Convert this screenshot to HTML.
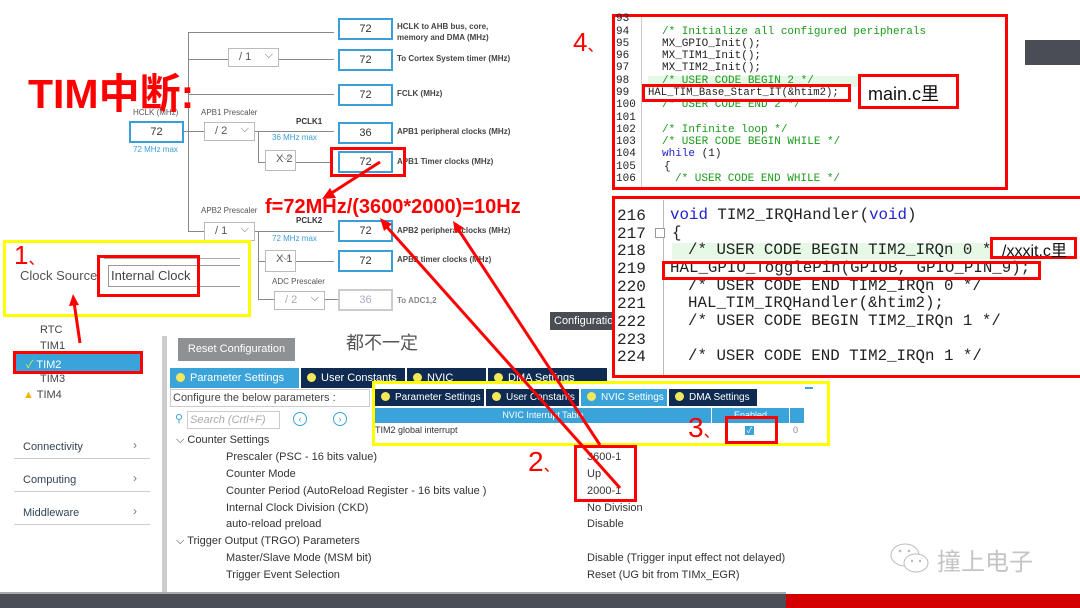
<!DOCTYPE html>
<html><head><meta charset="utf-8"><style>
*{margin:0;padding:0;box-sizing:border-box}
body{width:1080px;height:608px;position:relative;overflow:hidden;background:#fff;font-family:"Liberation Sans","Noto Sans CJK SC",sans-serif}
.a{position:absolute;white-space:nowrap}
.bx{position:absolute;border:2px solid #3a9fd8;background:#fff;text-align:center;font-size:11px;color:#333;line-height:18px;width:55px;height:22px}
.lb{position:absolute;font-size:8px;font-weight:bold;color:#444;white-space:nowrap}
.dd{position:absolute;border:1px solid #bbb;background:#fff;font-size:11px;color:#555;height:19px;width:51px;line-height:17px;padding-left:10px}
.dd:after{content:"⌵";position:absolute;right:5px;top:-2px;font-size:11px;color:#666}
.gl{position:absolute;background:#888}
.rb{position:absolute;border:3px solid #f00}
.mono{font-family:"Liberation Mono","Noto Sans CJK SC",monospace}
.c1{position:absolute;left:662px;font-size:11px;color:#222;white-space:nowrap}
.g{color:#1a9b1a}
.ln{position:absolute;left:616px;font-size:11px;color:#222}
.ln2{position:absolute;left:617px;font-size:16px;color:#222}
.c2{position:absolute;font-size:15.8px;color:#222;white-space:nowrap}
.tab{position:absolute;height:20px;background:#0f2b52;color:#fff;font-size:11px;line-height:20px;padding-left:6px;border-right:1px solid #fff;overflow:hidden}
.tab i{display:inline-block;width:9px;height:9px;border-radius:50%;background:#f2e85a;margin-right:5px;vertical-align:-1px}
.tab.on{background:#3aa3d9}
.pr{position:absolute;font-size:11px;color:#333;white-space:nowrap}
</style></head><body>

<div class="gl" style="left:188px;top:32px;width:1px;height:200px"></div>
<div class="gl" style="left:188px;top:32px;width:146px;height:1px"></div>
<div class="gl" style="left:188px;top:59px;width:40px;height:1px"></div>
<div class="gl" style="left:279px;top:59px;width:55px;height:1px"></div>
<div class="gl" style="left:188px;top:94px;width:146px;height:1px"></div>
<div class="gl" style="left:183px;top:131px;width:21px;height:1px"></div>
<div class="gl" style="left:255px;top:131px;width:79px;height:1px"></div>
<div class="gl" style="left:258px;top:131px;width:1px;height:32px"></div>
<div class="gl" style="left:258px;top:162px;width:7px;height:1px"></div>
<div class="gl" style="left:296px;top:162px;width:36px;height:1px"></div>
<div class="gl" style="left:188px;top:231px;width:16px;height:1px"></div>
<div class="gl" style="left:255px;top:231px;width:79px;height:1px"></div>
<div class="gl" style="left:258px;top:231px;width:1px;height:69px"></div>
<div class="gl" style="left:258px;top:261px;width:7px;height:1px"></div>
<div class="gl" style="left:296px;top:261px;width:38px;height:1px"></div>
<div class="gl" style="left:258px;top:299px;width:16px;height:1px"></div>
<div class="gl" style="left:325px;top:299px;width:13px;height:1px"></div>

<div class="bx" style="left:338px;top:18px">72</div>
<div class="lb" style="left:397px;top:21px;line-height:11px">HCLK to AHB bus, core,<br>memory and DMA (MHz)</div>
<div class="bx" style="left:338px;top:49px">72</div>
<div class="lb" style="left:397px;top:54px">To Cortex System timer (MHz)</div>
<div class="bx" style="left:338px;top:84px">72</div>
<div class="lb" style="left:397px;top:89px">FCLK (MHz)</div>
<div class="bx" style="left:338px;top:122px">36</div>
<div class="lb" style="left:397px;top:127px">APB1 peripheral clocks (MHz)</div>
<div class="bx" style="left:338px;top:151px">72</div>
<div class="lb" style="left:397px;top:157px">APB1 Timer clocks (MHz)</div>
<div class="bx" style="left:338px;top:220px">72</div>
<div class="lb" style="left:397px;top:226px">APB2 peripheral clocks (MHz)</div>
<div class="bx" style="left:338px;top:250px">72</div>
<div class="lb" style="left:397px;top:255px">APB2 timer clocks (MHz)</div>
<div class="bx" style="left:338px;top:289px;border-color:#ccc;color:#aac">36</div>
<div class="lb" style="left:397px;top:296px;color:#888">To ADC1,2</div>

<div class="bx" style="left:129px;top:121px">72</div>
<div class="a" style="left:133px;top:108px;font-size:8px;color:#555">HCLK (MHz)</div>
<div class="a" style="left:133px;top:145px;font-size:8px;color:#3a9fd8">72 MHz max</div>
<div class="dd" style="left:228px;top:48px">/ 1</div>
<div class="a" style="left:201px;top:108px;font-size:8px;color:#555">APB1 Prescaler</div>
<div class="dd" style="left:204px;top:122px">/ 2</div>
<div class="a" style="left:296px;top:117px;font-size:8px;font-weight:bold;color:#333">PCLK1</div>
<div class="a" style="left:272px;top:133px;font-size:8px;color:#3a9fd8">36 MHz max</div>
<div class="dd" style="left:265px;top:150px;width:31px;height:21px">X 2</div>
<div class="a" style="left:201px;top:206px;font-size:8px;color:#555">APB2 Prescaler</div>
<div class="dd" style="left:204px;top:222px">/ 1</div>
<div class="a" style="left:296px;top:216px;font-size:8px;font-weight:bold;color:#333">PCLK2</div>
<div class="a" style="left:272px;top:234px;font-size:8px;color:#3a9fd8">72 MHz max</div>
<div class="dd" style="left:265px;top:250px;width:31px;height:22px">X 1</div>
<div class="a" style="left:272px;top:277px;font-size:8px;color:#555">ADC Prescaler</div>
<div class="dd" style="left:274px;top:291px;color:#aaa">/ 2</div>

<div class="rb" style="left:330px;top:147px;width:76px;height:30px"></div>

<div class="a" style="left:28px;top:60px;font-size:41px;font-weight:bold;color:#f00">TIM中断:</div>
<div class="a" style="left:265px;top:196px;font-size:20px;color:#f00;font-weight:bold">f=72MHz/(3600*2000)=10Hz</div>

<div class="a" style="left:3px;top:240px;width:248px;height:77px;border:3px solid #ff0;background:#fff"></div>
<div class="a" style="left:14px;top:240px;font-size:26px;color:#f00">1<span style="font-size:16px">、</span></div>
<div class="a" style="left:20px;top:268px;font-size:13px;color:#555">Clock Source</div>
<div class="a" style="left:104px;top:258px;width:136px;height:1px;background:#aaa"></div>
<div class="a" style="left:108px;top:265px;width:132px;height:22px;border:1px solid #999;border-right:none;font-size:13px;color:#444;line-height:20px;padding-left:2px">Internal Clock</div>
<div class="rb" style="left:97px;top:255px;width:103px;height:42px"></div>

<div class="a" style="left:573px;top:27px;font-size:26px;color:#f00">4<span style="font-size:16px">、</span></div>
<div class="a" style="left:1025px;top:40px;width:55px;height:25px;background:#4a4e54"></div>
<div class="a" style="left:612px;top:14px;width:396px;height:176px;border:3px solid #f00;background:#fff;overflow:hidden"></div>
<div class="a" style="left:641px;top:17px;width:1px;height:170px;background:#ccc"></div>
<div class="a" style="left:648px;top:76px;width:290px;height:11px;background:#e6f8e6"></div>
<div class="mono">
<div class="ln" style="top:13px">93</div><div class="ln" style="top:26px">94</div><div class="ln" style="top:38px">95</div><div class="ln" style="top:50px">96</div><div class="ln" style="top:62px">97</div><div class="ln" style="top:75px">98</div><div class="ln" style="top:87px">99</div><div class="ln" style="top:99px">100</div><div class="ln" style="top:112px">101</div><div class="ln" style="top:124px">102</div><div class="ln" style="top:136px">103</div><div class="ln" style="top:148px">104</div><div class="ln" style="top:161px">105</div><div class="ln" style="top:173px">106</div>
<div class="c1 g" style="top:26px">/* Initialize all configured peripherals</div>
<div class="c1" style="top:38px">MX_GPIO_Init();</div>
<div class="c1" style="top:50px">MX_TIM1_Init();</div>
<div class="c1" style="top:62px">MX_TIM2_Init();</div>
<div class="c1 g" style="top:75px">/* USER CODE BEGIN 2 */</div>
<div class="c1" style="top:87px;left:648px;font-size:10.6px">HAL_TIM_Base_Start_IT(&amp;htim2);</div>
<div class="c1 g" style="top:99px">/* USER CODE END 2 */</div>
<div class="c1 g" style="top:124px">/* Infinite loop */</div>
<div class="c1 g" style="top:136px">/* USER CODE BEGIN WHILE */</div>
<div class="c1" style="top:148px"><span style="color:#22c">while</span> (1)</div>
<div class="c1" style="top:161px;left:664px">{</div>
<div class="c1 g" style="top:173px;left:675px">/* USER CODE END WHILE */</div>
</div>
<div class="rb" style="left:642px;top:84px;width:209px;height:18px"></div>
<div class="rb" style="left:858px;top:74px;width:101px;height:35px;background:#fff"></div>
<div class="a" style="left:868px;top:80px;font-size:18px;color:#111">main.c里</div>

<div class="a" style="left:612px;top:196px;width:468px;height:182px;border:3px solid #f00;border-right:none;background:#fff"></div>
<div class="a" style="left:663px;top:200px;width:1px;height:175px;background:#bbb"></div>
<div class="a" style="left:672px;top:243px;width:320px;height:16px;background:#e6f8e6"></div>
<div class="a" style="left:655px;top:228px;width:10px;height:10px;border:1px solid #999;background:#fff"></div>
<div class="mono">
<div class="ln2" style="top:207px">216</div><div class="ln2" style="top:225px">217</div><div class="ln2" style="top:242px">218</div><div class="ln2" style="top:260px">219</div><div class="ln2" style="top:278px">220</div><div class="ln2" style="top:295px">221</div><div class="ln2" style="top:313px">222</div><div class="ln2" style="top:331px">223</div><div class="ln2" style="top:348px">224</div>
<div class="c2" style="left:670px;top:206px"><span style="color:#22c">void</span> TIM2_IRQHandler(<span style="color:#22c">void</span>)</div>
<div class="c2" style="left:672px;top:224px">{</div>
<div class="c2 g" style="left:688px;top:241px">/* USER CODE BEGIN TIM2_IRQn 0 */</div>
<div class="c2" style="left:670px;top:259px">HAL_GPIO_TogglePin(GPIOB, GPIO_PIN_9);</div>
<div class="c2 g" style="left:688px;top:277px">/* USER CODE END TIM2_IRQn 0 */</div>
<div class="c2" style="left:688px;top:294px">HAL_TIM_IRQHandler(&amp;htim2);</div>
<div class="c2 g" style="left:688px;top:312px">/* USER CODE BEGIN TIM2_IRQn 1 */</div>
<div class="c2 g" style="left:688px;top:347px">/* USER CODE END TIM2_IRQn 1 */</div>
</div>
<div class="rb" style="left:662px;top:261px;width:379px;height:19px"></div>
<div class="rb" style="left:990px;top:237px;width:87px;height:22px;background:#fff"></div>
<div class="a" style="left:1002px;top:237px;font-size:16px;color:#111">/xxxit.c里</div>

<div class="a" style="left:40px;top:324px;font-size:11px;color:#444">RTC</div>
<div class="a" style="left:40px;top:340px;font-size:11px;color:#444">TIM1</div>
<div class="a" style="left:16px;top:354px;width:125px;height:18px;background:#3aa3d9"></div>
<div class="a" style="left:26px;top:356px;font-size:11px;color:#fff"><span style="color:#d6e84a">✓</span> TIM2</div>
<div class="rb" style="left:13px;top:351px;width:130px;height:23px"></div>
<div class="a" style="left:40px;top:373px;font-size:11px;color:#444">TIM3</div>
<div class="a" style="left:23px;top:389px;font-size:11px;color:#444"><span style="color:#f4b400">▲</span> TIM4</div>
<div class="a" style="left:23px;top:441px;font-size:11px;color:#345">Connectivity</div>
<div class="a" style="left:133px;top:438px;font-size:12px;color:#777">›</div>
<div class="a" style="left:14px;top:458px;width:136px;height:1px;background:#ccc"></div>
<div class="a" style="left:23px;top:474px;font-size:11px;color:#345">Computing</div>
<div class="a" style="left:133px;top:471px;font-size:12px;color:#777">›</div>
<div class="a" style="left:14px;top:491px;width:136px;height:1px;background:#ccc"></div>
<div class="a" style="left:23px;top:507px;font-size:11px;color:#345">Middleware</div>
<div class="a" style="left:133px;top:504px;font-size:12px;color:#777">›</div>
<div class="a" style="left:14px;top:524px;width:136px;height:1px;background:#ccc"></div>
<div class="a" style="left:162px;top:336px;width:5px;height:256px;background:#ccc"></div>

<div class="a" style="left:178px;top:338px;width:117px;height:23px;background:#8e9193;color:#fff;font-size:11px;line-height:23px;text-align:center">Reset Configuration</div>
<div class="a" style="left:346px;top:329px;font-size:18px;color:#555">都不一定</div>
<div class="a" style="left:550px;top:312px;width:62px;height:18px;background:#4a4e54;color:#fff;font-size:11px;line-height:18px;padding-left:4px;overflow:hidden">Configuratio</div>

<div class="tab on" style="left:170px;top:368px;width:130px"><i></i>Parameter Settings</div>
<div class="tab" style="left:301px;top:368px;width:105px"><i></i>User Constants</div>
<div class="tab" style="left:407px;top:368px;width:80px"><i></i>NVIC Settings</div>
<div class="tab" style="left:488px;top:368px;width:120px"><i></i>DMA Settings</div>
<div class="a" style="left:170px;top:389px;width:200px;height:18px;border:1px solid #ccc;font-size:11px;color:#444;line-height:16px;padding-left:2px">Configure the below parameters :</div>
<div class="a" style="left:175px;top:412px;font-size:11px;color:#3aa3d9">⚲</div>
<div class="a" style="left:187px;top:411px;width:93px;height:18px;border:1px solid #ccc;font-size:11px;color:#aaa;font-style:italic;line-height:16px;padding-left:2px">Search (Crtl+F)</div>
<div class="a" style="left:293px;top:412px;width:14px;height:14px;border:1px solid #3aa3d9;border-radius:50%;font-size:9px;color:#3aa3d9;text-align:center;line-height:12px">‹</div>
<div class="a" style="left:333px;top:412px;width:14px;height:14px;border:1px solid #3aa3d9;border-radius:50%;font-size:9px;color:#3aa3d9;text-align:center;line-height:12px">›</div>
<div class="pr" style="left:176px;top:434px">⌵ Counter Settings</div>
<div class="pr" style="left:226px;top:451px">Prescaler (PSC - 16 bits value)</div>
<div class="pr" style="left:226px;top:468px">Counter Mode</div>
<div class="pr" style="left:226px;top:485px">Counter Period (AutoReload Register - 16 bits value )</div>
<div class="pr" style="left:226px;top:502px">Internal Clock Division (CKD)</div>
<div class="pr" style="left:226px;top:518px">auto-reload preload</div>
<div class="pr" style="left:176px;top:535px">⌵ Trigger Output (TRGO) Parameters</div>
<div class="pr" style="left:226px;top:552px">Master/Slave Mode (MSM bit)</div>
<div class="pr" style="left:226px;top:569px">Trigger Event Selection</div>
<div class="pr" style="left:587px;top:451px">3600-1</div>
<div class="pr" style="left:587px;top:468px">Up</div>
<div class="pr" style="left:587px;top:485px">2000-1</div>
<div class="pr" style="left:587px;top:502px">No Division</div>
<div class="pr" style="left:587px;top:518px">Disable</div>
<div class="pr" style="left:587px;top:552px">Disable (Trigger input effect not delayed)</div>
<div class="pr" style="left:587px;top:569px">Reset (UG bit from TIMx_EGR)</div>

<div class="a" style="left:372px;top:381px;width:458px;height:65px;border:3px solid #ff0;background:#fff"></div>
<div class="a" style="left:805px;top:387px;width:8px;height:2px;background:#3aa3d9"></div>
<div class="tab" style="left:375px;top:389px;width:110px;height:17px;line-height:17px;font-size:10px"><i></i>Parameter Settings</div>
<div class="tab" style="left:486px;top:389px;width:94px;height:17px;line-height:17px;font-size:10px"><i></i>User Constants</div>
<div class="tab on" style="left:581px;top:389px;width:87px;height:17px;line-height:17px;font-size:10px"><i></i>NVIC Settings</div>
<div class="tab" style="left:669px;top:389px;width:89px;height:17px;line-height:17px;font-size:10px"><i></i>DMA Settings</div>
<div class="a" style="left:375px;top:408px;width:336px;height:15px;background:#3aa3d9;color:#fff;font-size:9px;text-align:center;line-height:15px">NVIC Interrupt Table</div>
<div class="a" style="left:712px;top:408px;width:77px;height:15px;background:#3aa3d9;color:#fff;font-size:9px;text-align:center;line-height:15px">Enabled</div>
<div class="a" style="left:790px;top:408px;width:14px;height:15px;background:#3aa3d9"></div>
<div class="a" style="left:375px;top:425px;font-size:9px;color:#333">TIM2 global interrupt</div>
<div class="a" style="left:745px;top:426px;width:9px;height:9px;background:#3aa3d9;color:#fff;font-size:8px;line-height:9px;text-align:center">✓</div>
<div class="a" style="left:793px;top:425px;font-size:9px;color:#888">0</div>
<div class="rb" style="left:725px;top:416px;width:53px;height:28px"></div>
<div class="a" style="left:688px;top:412px;font-size:28px;color:#f00">3<span style="font-size:16px">、</span></div>
<div class="a" style="left:528px;top:446px;font-size:28px;color:#f00">2<span style="font-size:16px">、</span></div>
<div class="rb" style="left:574px;top:445px;width:63px;height:57px"></div>

<svg class="a" style="left:0;top:0" width="1080" height="608">
<g stroke="#f00" stroke-width="3" fill="#f00">
<line x1="380" y1="162" x2="330" y2="194"/><polygon points="322,199 330,188 336,198" stroke="none"/>
<line x1="620" y1="488" x2="386" y2="226"/><polygon points="380,218 392,224 384,231" stroke="none"/>
<line x1="600" y1="445" x2="458" y2="229"/><polygon points="453,221 464,228 455,233" stroke="none"/>
<line x1="80" y1="343" x2="74" y2="302"/><polygon points="73,294 79,305 69,306" stroke="none"/>
</g></svg>

<svg class="a" style="left:889px;top:540px" width="45" height="36">
<ellipse cx="16" cy="15" rx="14" ry="11" fill="#fff" stroke="#bbb"/>
<ellipse cx="27" cy="23" rx="12" ry="9" fill="#fff" stroke="#bbb"/>
<circle cx="11" cy="11" r="1.3" fill="#bbb"/><circle cx="20" cy="11" r="1.3" fill="#bbb"/>
<circle cx="23" cy="21" r="1.2" fill="#bbb"/><circle cx="31" cy="21" r="1.2" fill="#bbb"/>
</svg>
<div class="a" style="left:937px;top:542px;font-size:24px;color:#c4c4c4">撞上电子</div>

<div class="a" style="left:0;top:592px;width:786px;height:2px;background:#aaa"></div>
<div class="a" style="left:0;top:594px;width:786px;height:14px;background:#4b4f55"></div>
<div class="a" style="left:786px;top:594px;width:294px;height:14px;background:#d40000"></div>
</body></html>
